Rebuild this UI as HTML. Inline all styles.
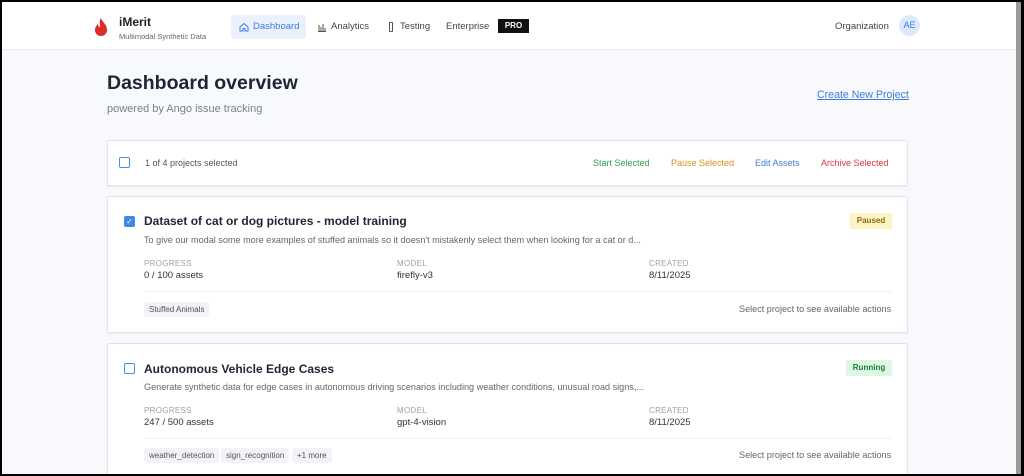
<!DOCTYPE html>
<html><head><meta charset="utf-8"><style>
*{box-sizing:border-box;margin:0;padding:0}
body{width:1024px;height:476px;overflow:hidden;background:#000;font-family:"Liberation Sans",Arial,sans-serif;position:relative}
.vp{position:absolute;left:2px;top:2px;width:1014px;height:472px;background:#f8f9fc;overflow:hidden}
.sb{position:absolute;left:1016px;top:2px;width:5px;height:472px;background:#9a9a9a}
.hdr{position:absolute;left:0;top:0;width:1014px;height:48px;background:#fff;border-bottom:1px solid #e8eaef}
.a{position:absolute;white-space:nowrap}
.card{position:absolute;left:105px;width:801px;background:#fff;border:1px solid #e1e4ea;border-radius:2px;box-shadow:0 1px 2px rgba(0,0,0,.05)}
.lab{font-size:8px;color:#9aa1ad;letter-spacing:.3px}
.val{font-size:9.5px;color:#333}
.tag{position:absolute;background:#f1f3f6;border-radius:3px;font-size:8px;color:#555;padding:3px 5px;white-space:nowrap}
.cb{position:absolute;width:11px;height:11px;border:1.5px solid #4a8fe0;border-radius:2px;background:#fff}
.desc{font-size:9.1px;color:#666}
.act{font-size:9px}
</style></head><body>
<div class="vp">
 <div class="hdr">
  <svg class="a" style="left:92px;top:15px" width="14" height="20" viewBox="0 0 14 20"><path d="M7 1C8 5 13 7 13 13c0 4-3 6-6 6s-6-2-6-6c0-3 2-5 3-6 0 2 1 3 2 3C6 7 5 4 7 1z" fill="#e02b2b"/></svg>
  <div class="a" style="left:117px;top:13px;font-size:12px;font-weight:bold;color:#222">iMerit</div>
  <div class="a" style="left:117px;top:30px;font-size:7.5px;color:#666">Multimodal Synthetic Data</div>
  <div class="a" style="left:229px;top:13px;width:75px;height:24px;background:#eaf1fd;border-radius:3px"></div>
  <svg class="a" style="left:237px;top:20px" width="10" height="10" viewBox="0 0 10 10"><path d="M1 5L5 1.5 9 5V9H6V6.5H4V9H1z" fill="none" stroke="#3b7ddd" stroke-width="1"/></svg>
  <div class="a" style="left:251px;top:19px;font-size:9.5px;color:#3b7ddd">Dashboard</div>
  <svg class="a" style="left:315px;top:20px" width="10" height="10" viewBox="0 0 10 10"><path d="M1 9.5H9M2 9V3M4 9V5M6 9V2M8 9V6" stroke="#555" stroke-width="1"/></svg>
  <div class="a" style="left:329px;top:19px;font-size:9.5px;color:#444">Analytics</div>
  <div class="a" style="left:387px;top:20px;width:4px;height:10px;border:1px solid #555;border-radius:1px"></div>
  <div class="a" style="left:398px;top:19px;font-size:9.5px;color:#444">Testing</div>
  <div class="a" style="left:444px;top:19px;font-size:9.5px;color:#444">Enterprise</div>
  <div class="a" style="left:496px;top:17px;width:31px;height:14px;background:#111;color:#fff;font-size:8px;font-weight:bold;text-align:center;line-height:14px">PRO</div>
  <div class="a" style="left:833px;top:19px;font-size:9.5px;color:#444">Organization</div>
  <div class="a" style="left:897px;top:13px;width:21px;height:21px;border-radius:50%;background:#dde8fb;color:#3b7ddd;font-size:9px;text-align:center;line-height:21px">AE</div>
 </div>
 <div class="a" style="left:105px;top:70px;font-size:19.5px;font-weight:bold;color:#1f2533">Dashboard overview</div>
 <div class="a" style="left:105px;top:101px;font-size:11px;color:#7a818c">powered by Ango issue tracking</div>
 <div class="a" style="left:815px;top:87px;font-size:10.6px;color:#3b7ddd;text-decoration:underline">Create New Project</div>

 <div class="card" style="top:138px;height:46px">
  <div class="cb" style="left:11px;top:16px"></div>
  <div class="a act" style="left:37px;top:17px;color:#555">1 of 4 projects selected</div>
  <div class="a act" style="left:485px;top:17px;color:#2ea44f">Start Selected</div>
  <div class="a act" style="left:563px;top:17px;color:#d9901a">Pause Selected</div>
  <div class="a act" style="left:647px;top:17px;color:#3b7ddd">Edit Assets</div>
  <div class="a act" style="left:713px;top:17px;color:#e0343c">Archive Selected</div>
 </div>

 <div class="card" style="top:194px;height:137px">
  <div class="a" style="left:16px;top:19px;width:11px;height:11px;background:#3b8ae6;border-radius:2px;color:#fff;font-size:8px;text-align:center;line-height:11px">✓</div>
  <div class="a" style="left:36px;top:17px;font-size:12px;font-weight:bold;color:#1f2533">Dataset of cat or dog pictures - model training</div>
  <div class="a" style="left:742px;top:16px;width:42px;height:16px;background:#fdf3c4;color:#8a6d0a;font-size:8px;font-weight:bold;text-align:center;line-height:16px;border-radius:2px">Paused</div>
  <div class="a desc" style="left:36px;top:38px">To give our modal some more examples of stuffed animals so it doesn't mistakenly select them when looking for a cat or d...</div>
  <div class="a lab" style="left:36px;top:62px">PROGRESS</div>
  <div class="a val" style="left:36px;top:73px">0 / 100 assets</div>
  <div class="a lab" style="left:289px;top:62px">MODEL</div>
  <div class="a val" style="left:289px;top:73px">firefly-v3</div>
  <div class="a lab" style="left:541px;top:62px">CREATED</div>
  <div class="a val" style="left:541px;top:73px">8/11/2025</div>
  <div class="a" style="left:36px;top:94px;width:748px;height:1px;background:#eef0f3"></div>
  <div class="tag" style="left:36px;top:105px">Stuffed Animals</div>
  <div class="a desc" style="left:631px;top:107px">Select project to see available actions</div>
 </div>

 <div class="card" style="top:341px;height:140px">
  <div class="cb" style="left:16px;top:19px"></div>
  <div class="a" style="left:36px;top:18px;font-size:12px;font-weight:bold;color:#1f2533">Autonomous Vehicle Edge Cases</div>
  <div class="a" style="left:738px;top:16px;width:46px;height:16px;background:#dcf7e3;color:#1e7a3a;font-size:8px;font-weight:bold;text-align:center;line-height:16px;border-radius:2px">Running</div>
  <div class="a desc" style="left:36px;top:38px">Generate synthetic data for edge cases in autonomous driving scenarios including weather conditions, unusual road signs,...</div>
  <div class="a lab" style="left:36px;top:62px">PROGRESS</div>
  <div class="a val" style="left:36px;top:73px">247 / 500 assets</div>
  <div class="a lab" style="left:289px;top:62px">MODEL</div>
  <div class="a val" style="left:289px;top:73px">gpt-4-vision</div>
  <div class="a lab" style="left:541px;top:62px">CREATED</div>
  <div class="a val" style="left:541px;top:73px">8/11/2025</div>
  <div class="a" style="left:36px;top:94px;width:748px;height:1px;background:#eef0f3"></div>
  <div class="tag" style="left:36px;top:104px">weather_detection</div>
  <div class="tag" style="left:113px;top:104px">sign_recognition</div>
  <div class="tag" style="left:184px;top:104px">+1 more</div>
  <div class="a desc" style="left:631px;top:106px">Select project to see available actions</div>
 </div>
</div>
<div class="sb"></div>
</body></html>
